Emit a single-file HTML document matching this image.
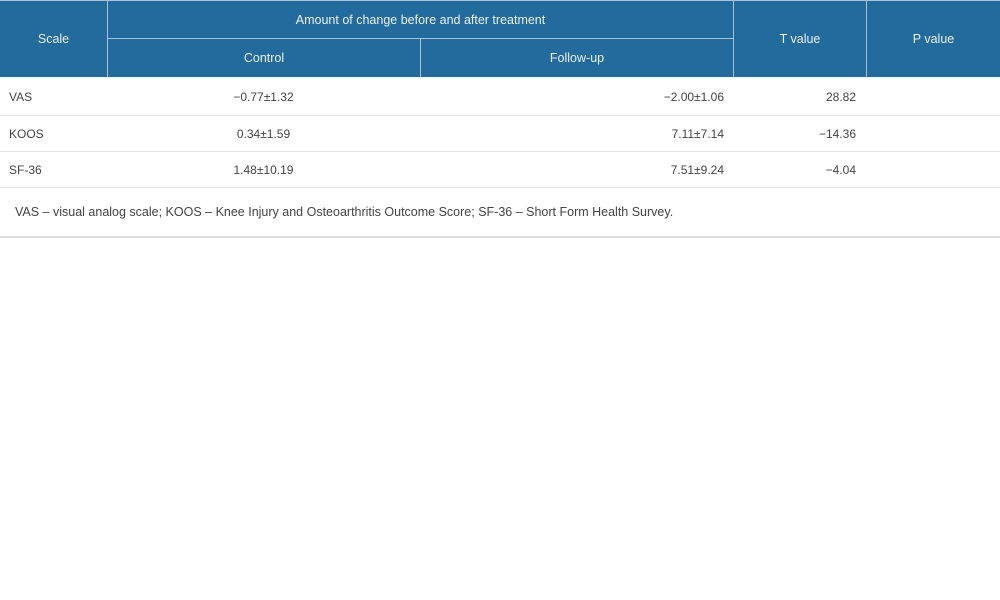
<!DOCTYPE html>
<html><head><meta charset="utf-8"><style>
body{margin:0;width:1000px;height:600px;background:#fff;font-family:"Liberation Sans","DejaVu Sans",sans-serif;position:relative;overflow:hidden}
.a{position:absolute}
.h{background:#236b9c;color:#e8f0f6;font-size:12.5px;display:flex;align-items:center;justify-content:center}
.t{font-size:12px;color:#444;line-height:14px}
.vl{position:absolute;width:1px;background:#a9c4d8}
.hl{position:absolute;height:1px;background:#e2e2e2;left:0;width:1000px}
</style></head><body>
<div class="a h" style="left:0;top:0;width:1000px;height:77px"></div>
<div class="a" style="left:0;top:0;width:1000px;height:1px;background:#a9c4d8"></div>
<div class="a" style="left:107px;top:38px;width:626px;height:1px;background:#a9c4d8"></div>
<div class="vl" style="left:107px;top:0;height:77px"></div>
<div class="vl" style="left:420px;top:39px;height:38px"></div>
<div class="vl" style="left:733px;top:0;height:77px"></div>
<div class="vl" style="left:866px;top:0;height:77px"></div>
<div class="a h" style="left:0;top:1px;width:107px;height:76px;background:none">Scale</div>
<div class="a h" style="left:108px;top:1px;width:625px;height:37px;background:none">Amount of change before and after treatment</div>
<div class="a h" style="left:108px;top:39px;width:312px;height:38px;background:none">Control</div>
<div class="a h" style="left:421px;top:39px;width:312px;height:38px;background:none">Follow-up</div>
<div class="a h" style="left:734px;top:1px;width:132px;height:76px;background:none">T value</div>
<div class="a h" style="left:867px;top:1px;width:133px;height:76px;background:none">P value</div>
<div class="hl" style="top:115px"></div>
<div class="hl" style="top:151px"></div>
<div class="hl" style="top:187px"></div>
<div class="hl" style="top:236px;height:2px;background:#ddd"></div>
<div class="a t" style="left:9px;top:90px">VAS</div>
<div class="a t" style="left:9px;top:127px">KOOS</div>
<div class="a t" style="left:9px;top:163px">SF-36</div>
<div class="a t" style="left:107px;width:313px;text-align:center;top:90px">−0.77±1.32</div>
<div class="a t" style="left:107px;width:313px;text-align:center;top:127px">0.34±1.59</div>
<div class="a t" style="left:107px;width:313px;text-align:center;top:163px">1.48±10.19</div>
<div class="a t" style="left:420px;width:304px;text-align:right;top:90px">−2.00±1.06</div>
<div class="a t" style="left:420px;width:304px;text-align:right;top:127px">7.11±7.14</div>
<div class="a t" style="left:420px;width:304px;text-align:right;top:163px">7.51±9.24</div>
<div class="a t" style="left:733px;width:123px;text-align:right;top:90px">28.82</div>
<div class="a t" style="left:733px;width:123px;text-align:right;top:127px">−14.36</div>
<div class="a t" style="left:733px;width:123px;text-align:right;top:163px">−4.04</div>
<div class="a t" style="left:15px;top:205px;font-size:12.5px">VAS – visual analog scale; KOOS – Knee Injury and Osteoarthritis Outcome Score; SF-36 – Short Form Health Survey.</div>
</body></html>
